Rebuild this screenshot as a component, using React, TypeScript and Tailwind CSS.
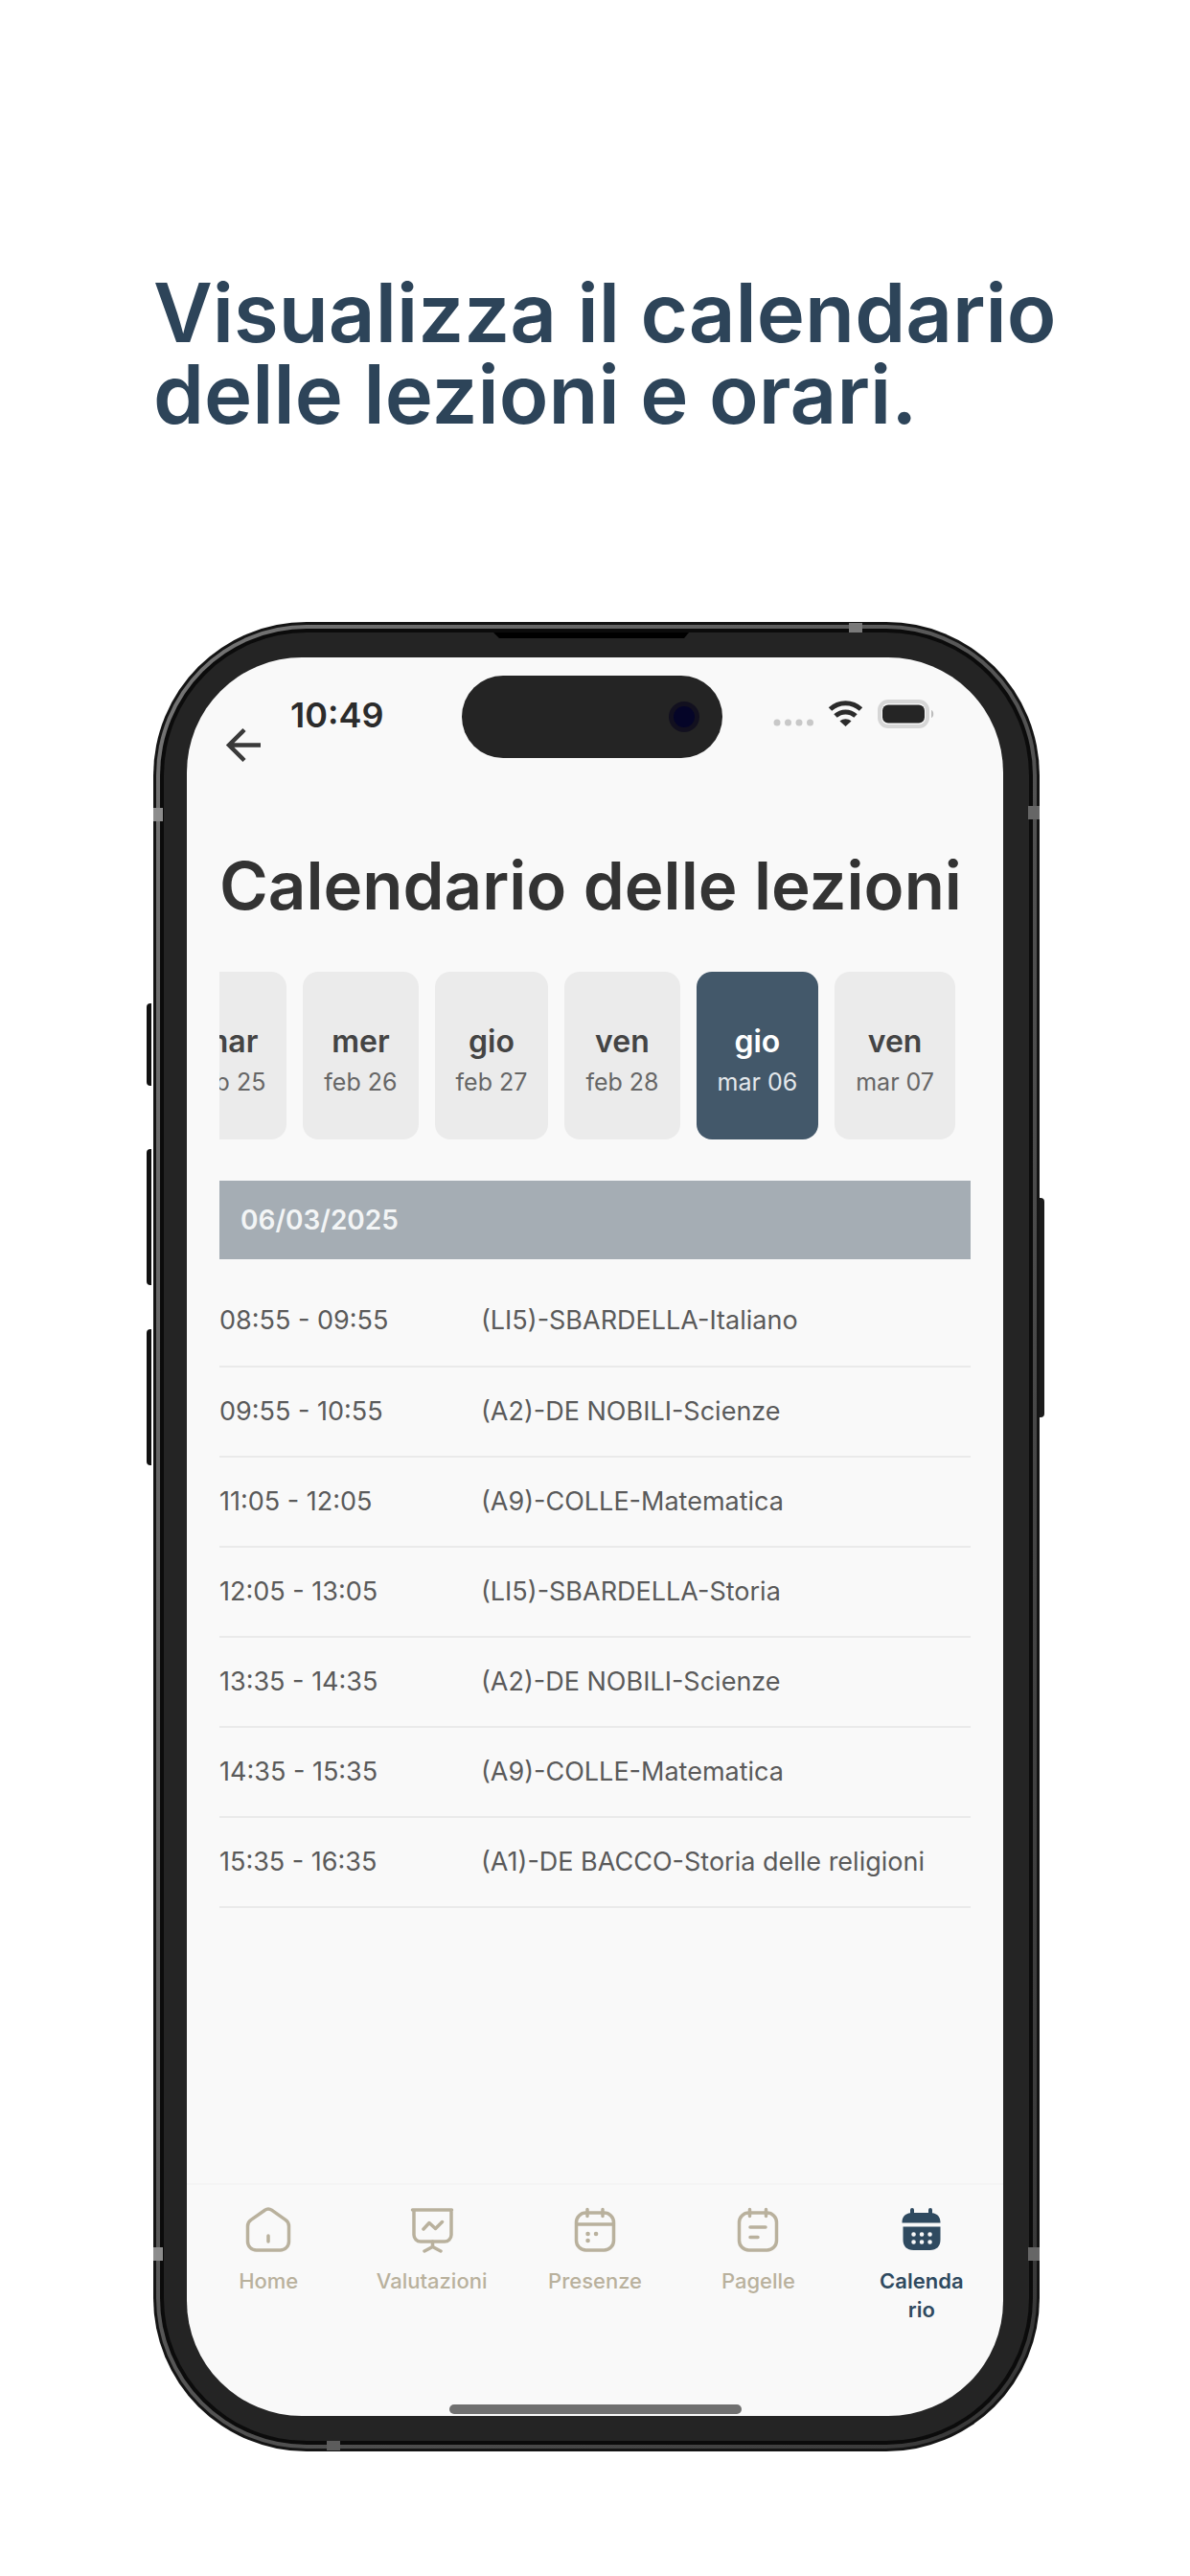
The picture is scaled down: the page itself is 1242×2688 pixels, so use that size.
import { useState } from "react";
import type { ReactNode } from "react";

interface Day {
  id: string;
  name: string;
  date: string;
}

interface Lesson {
  time: string;
  subject: string;
}

const days: Day[] = [
  { id: "2025-02-25", name: "mar", date: "feb 25" },
  { id: "2025-02-26", name: "mer", date: "feb 26" },
  { id: "2025-02-27", name: "gio", date: "feb 27" },
  { id: "2025-02-28", name: "ven", date: "feb 28" },
  { id: "2025-03-06", name: "gio", date: "mar 06" },
  { id: "2025-03-07", name: "ven", date: "mar 07" },
];

const lessons: Lesson[] = [
  { time: "08:55 - 09:55", subject: "(LI5)-SBARDELLA-Italiano" },
  { time: "09:55 - 10:55", subject: "(A2)-DE NOBILI-Scienze" },
  { time: "11:05 - 12:05", subject: "(A9)-COLLE-Matematica" },
  { time: "12:05 - 13:05", subject: "(LI5)-SBARDELLA-Storia" },
  { time: "13:35 - 14:35", subject: "(A2)-DE NOBILI-Scienze" },
  { time: "14:35 - 15:35", subject: "(A9)-COLLE-Matematica" },
  { time: "15:35 - 16:35", subject: "(A1)-DE BACCO-Storia delle religioni" },
];

const formatDay = (id: string) => id.split("-").reverse().join("/");

function Icon({ children }: { children: ReactNode }) {
  return (
    <svg
      viewBox="0 0 48 48"
      className="size-12"
      fill="none"
      stroke="currentColor"
      strokeWidth="3.5"
      strokeLinecap="round"
      strokeLinejoin="round"
      aria-hidden="true"
    >
      {children}
    </svg>
  );
}

const tabs = [
  {
    label: "Home",
    icon: (
      <Icon>
        <path d="M20.5 3.2a6 6 0 0 1 7 0l14.5 10.2a8 8 0 0 1 3.5 6.6v16a9 9 0 0 1-9 9h-25a9 9 0 0 1-9-9v-16a8 8 0 0 1 3.5-6.6z" />
        <path d="M24 30v6" />
      </Icon>
    ),
  },
  {
    label: "Valutazioni",
    icon: (
      <Icon>
        <path d="M3.5 3h41M5 3v26a7 7 0 0 0 7 7h25a7 7 0 0 0 7-7V3" />
        <path d="M15 23l6-6.5 6.5 6 7-7M24.5 36v5M16 46l8.5-4.5 8.5 4.5" />
      </Icon>
    ),
  },
  {
    label: "Presenze",
    icon: (
      <Icon>
        <rect x="4.5" y="6" width="39" height="39" rx="10" />
        <path d="M5 18h38M16 2.5v7M32 2.5v7" />
        <path d="M16.5 28h.1M25 28h.1M16.5 35h.1" strokeWidth="4.5" />
      </Icon>
    ),
  },
  {
    label: "Pagelle",
    icon: (
      <Icon>
        <rect x="4.5" y="6" width="39" height="39" rx="10" />
        <path d="M15.5 2.5v7M32.5 2.5v7M16 21h16M16 31.5h8" />
      </Icon>
    ),
  },
  {
    label: "Calendario",
    icon: (
      <Icon>
        <path
          fill="currentColor"
          stroke="none"
          d="M12 3a2 2 0 0 1 4 0v3h15V3a2 2 0 0 1 4 0v3.2c5 .6 8.5 3.8 8.5 9.8v.5h-40V16c0-6 3.5-9.2 8.5-9.8zM4.5 20.5h39V34c0 7-4 11-11 11h-17c-7 0-11-4-11-11z"
        />
        <path
          d="M15.5 28.5h.1M24 28.5h.1M32.5 28.5h.1M15.5 36.5h.1M24 36.5h.1M32.5 36.5h.1"
          stroke="#f9f9f9"
          strokeWidth="4.5"
        />
      </Icon>
    ),
  },
];

function StatusIcons() {
  return (
    <svg viewBox="0 0 170 36" className="h-9 w-[170px]" fill="none" aria-hidden="true">
      <g fill="#c8c8c8">
        <circle cx="6" cy="27" r="3.5" />
        <circle cx="17.5" cy="27" r="3.5" />
        <circle cx="29" cy="27" r="3.5" />
        <circle cx="40.5" cy="27" r="3.5" />
      </g>
      <g stroke="#2b2b2b" strokeWidth="5">
        <path d="M61.5 13c9-8.5 23-8.5 32 0" />
        <path d="M67 20c6-5.5 15-5.5 21 0" />
      </g>
      <path d="M71.5 25.5c3.5-3 8.5-3 12 0L77.5 31z" fill="#2b2b2b" />
      <rect x="113" y="5" width="50" height="26" rx="9" stroke="#d6d6d6" strokeWidth="4" />
      <rect x="116" y="8.5" width="44" height="19" rx="6" fill="#252525" />
      <path d="M167 14c3 1 3 7 0 8z" fill="#bdbdbd" />
    </svg>
  );
}

// Side keys, antenna bands and earpiece, all pinned to the edge of the case.
function CaseDetails() {
  return (
    <>
      <span className="absolute -left-[7px] top-[398px] h-[86px] w-[5px] rounded-l bg-[#111]" />
      <span className="absolute -left-[7px] top-[550px] h-[142px] w-[5px] rounded-l bg-[#111]" />
      <span className="absolute -left-[7px] top-[738px] h-[142px] w-[5px] rounded-l bg-[#111]" />
      <span className="absolute -right-[5px] top-[601px] h-[229px] w-[5px] rounded-r bg-[#1c1c1c]" />
      <span className="absolute left-0 top-[194px] h-3.5 w-2.5 bg-[#8c8c8c]" />
      <span className="absolute right-0 top-[192px] h-3.5 w-3 bg-[#666]" />
      <span className="absolute bottom-[199px] left-0 h-3.5 w-2.5 bg-[#8c8c8c]" />
      <span className="absolute bottom-[199px] right-0 h-3.5 w-3 bg-[#666]" />
      <span className="absolute right-[185px] top-px h-2.5 w-3.5 bg-[#7a7a7a]" />
      <span className="absolute bottom-px left-[181px] h-2.5 w-3.5 bg-[#5c5c5c]" />
      <svg viewBox="0 0 204 6" className="absolute left-[355px] top-[11px] h-1.5 w-[204px]" aria-hidden="true">
        <path d="M0 0h204l-5 6H6z" fill="#000" />
      </svg>
    </>
  );
}

function PhoneFrame({ children }: { children: ReactNode }) {
  return (
    <div className="relative rounded-[160px] bg-[#141414] p-[3px]">
      <div className="rounded-[157px] bg-linear-to-br from-[#757575] to-[#363636] p-1">
        <div className="rounded-[153px] bg-[#0b0b0b] p-1">
          <div className="rounded-[149px] bg-[#242424] py-[26px] pl-6 pr-[27px]">{children}</div>
        </div>
      </div>
      <CaseDetails />
    </div>
  );
}

export default function App() {
  const [selected, setSelected] = useState("2025-03-06");
  const [activeTab, setActiveTab] = useState("Calendario");

  return (
    <main className="min-h-screen bg-white pb-[131px] pl-40 pr-[157px] pt-[284px] font-['Inter',sans-serif]">
      <h1 className="whitespace-nowrap text-[85px] font-semibold leading-[85px] text-[#2d4459]">
        Visualizza il calendario
        <br />
        delle lezioni e orari.
      </h1>

      <div className="mt-[195px]">
        <PhoneFrame>
          <div className="relative overflow-hidden rounded-[120px] bg-[#f9f9f9]">
            <div className="flex h-[198px] items-start pl-9 pr-[72px]">
              <button aria-label="Indietro" className="mt-[68px] text-[#3a3a3a]">
                <svg viewBox="0 0 48 48" className="size-12" fill="none" stroke="currentColor" strokeWidth="4.5" aria-hidden="true">
                  <path d="M41 23.5H8M24 7.5l-16 16 16 16" />
                </svg>
              </button>
              <span className="ml-6 mt-9 text-4xl font-semibold leading-[48px] text-[#2b2b2b]">10:49</span>
              <span className="ml-auto mt-[41px]">
                <StatusIcons />
              </span>
            </div>
            <div className="absolute left-[287px] top-[19px] flex h-[86px] w-[272px] items-center justify-end rounded-full bg-[#242424] pr-6">
              <span className="size-8 rounded-full border-[5px] border-[#12101f] bg-[#050528]" />
            </div>

            <section className="px-[34px]">
              <h2 className="whitespace-nowrap text-[69px] font-semibold leading-[80px] text-[#333]">Calendario delle lezioni</h2>

              <div className="mt-[50px] flex justify-end gap-[17px] overflow-hidden pr-4">
                {days.map((day) => (
                  <button
                    key={day.id}
                    onClick={() => setSelected(day.id)}
                    aria-pressed={day.id === selected}
                    className={`flex h-[175px] shrink-0 flex-col items-center rounded-2xl px-[22px] pt-[52px] ${
                      day.id === selected ? "bg-[#43586a] text-white" : "bg-[#ebebeb] text-[#444]"
                    }`}
                  >
                    <span className="text-[32px] font-semibold leading-[42px]">{day.name}</span>
                    <span className={`text-[25px] leading-[42px] ${day.id === selected ? "text-[#e4e8eb]" : "text-[#666]"}`}>
                      {day.date}
                    </span>
                  </button>
                ))}
              </div>

              <h3 className="mt-[43px] bg-[#a5adb4] px-[22px] text-[28px] font-semibold leading-[82px] text-[#f3f5f6]">
                {formatDay(selected)}
              </h3>

              <table className="mt-[18px] w-full text-left text-[27px] text-[#5a5a5a]" aria-label="Lezioni del giorno">
                <tbody>
                  {lessons.map((lesson) => (
                    <tr key={lesson.time} className="h-[94px] border-b-2 border-[#eaeaea]">
                      <td className="w-[273px]">{lesson.time}</td>
                      <td>{lesson.subject}</td>
                    </tr>
                  ))}
                </tbody>
              </table>
            </section>

            <nav className="mt-[287px] flex border-t-2 border-[#f5f5f5] pt-[23px]">
              {tabs.map((tab) => (
                <button
                  key={tab.label}
                  onClick={() => setActiveTab(tab.label)}
                  className={`flex h-[206px] flex-1 basis-0 flex-col items-center ${
                    tab.label === activeTab ? "font-semibold text-[#2f4a60]" : "font-medium text-[#b9b19d]"
                  }`}
                >
                  {tab.icon}
                  <span className={`mt-3.5 text-[22px] leading-[30px] ${tab.label === activeTab ? "w-[94px] break-all" : ""}`}>
                    {tab.label}
                  </span>
                </button>
              ))}
            </nav>
            <div className="mx-auto mb-0.5 h-2.5 w-[305px] rounded-full bg-[#707070]" />
          </div>
        </PhoneFrame>
      </div>
    </main>
  );
}
